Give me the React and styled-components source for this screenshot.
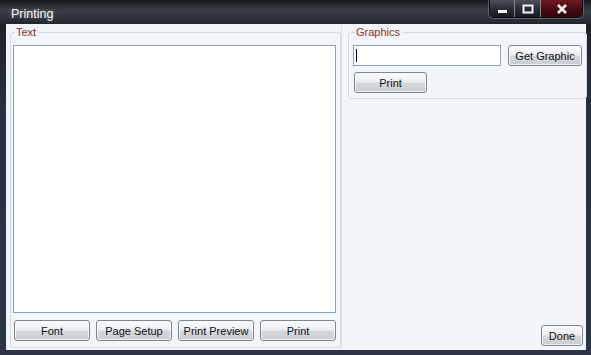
import React from "react";
import styled, { createGlobalStyle } from "styled-components";

const Global = createGlobalStyle`
  html, body { margin: 0; padding: 0; background: #1b2029; }
  * { box-sizing: border-box; }
`;

const Window = styled.div`
  width: 591px;
  height: 355px;
  display: flex;
  flex-direction: column;
  background: linear-gradient(#1a1d22, #263040 30%, #2c3646);
  font-family: "Liberation Sans", Arial, sans-serif;
  font-size: 11px;
  color: #000;
`;

const TitleBar = styled.div`
  height: 24px;
  display: flex;
  align-items: flex-start;
  justify-content: space-between;
  padding: 0 8px 0 11px;
  background: linear-gradient(#15171b, #3a3e46 45%, #22252b 100%);
`;

const Title = styled.span`
  color: #f4f6f8;
  font-size: 12.5px;
  line-height: 14px;
  margin-top: 7px;
  text-shadow: 0 0 4px rgba(255, 255, 255, 0.35);
`;

const Caption = styled.div`
  display: flex;
  height: 18px;
  margin-left: auto;
  border: 1px solid #0b0d10;
  border-top: none;
  border-radius: 0 0 5px 5px;
  overflow: hidden;
  box-shadow: 0 0 0 1px rgba(180, 190, 205, 0.35);
`;

const CapBtn = styled.div`
  width: ${(p) => p.w}px;
  display: flex;
  align-items: center;
  justify-content: center;
  background: ${(p) =>
    p.close
      ? "linear-gradient(#6d1a24, #4a0c14 50%, #2e050a)"
      : "linear-gradient(#4c525c, #2a2f37 50%, #16191e)"};
  border-left: ${(p) => (p.first ? "none" : "1px solid #7b8290")};
`;

const Client = styled.div`
  flex: 1;
  display: flex;
  margin: 0 5px 5px 6px;
  background: #f2f5f9;
`;

const LeftPane = styled.div`
  width: 336px;
  display: flex;
  padding: 2px 0 2px 4px;
  border-right: 1px solid #dde3ea;
`;

const RightPane = styled.div`
  flex: 1;
  display: flex;
  flex-direction: column;
  padding: 2px 0 4px 6px;
`;

const Group = styled.fieldset`
  margin: 0;
  padding: ${(p) => p.pad};
  border: 1px solid #d3dbe4;
  border-radius: 3px;
  display: flex;
  flex-direction: column;
  flex: ${(p) => (p.grow ? 1 : "none")};
  min-width: 0;
`;

const Legend = styled.legend`
  padding: 0 2px 0 1px;
  margin-left: 2px;
  color: #8a3320;
  font-size: 11px;
  line-height: 13px;
`;

const TextArea = styled.div`
  flex: 1;
  margin-top: 6px;
  background: #fff;
  border: 1px solid #86a3b8;
`;

const ButtonRow = styled.div`
  display: grid;
  grid-template-columns: repeat(4, 76px);
  column-gap: 6px;
  margin: 7px 0 0 1px;
`;

const Button = styled.div`
  width: ${(p) => (p.w ? `${p.w}px` : "auto")};
  height: 21px;
  display: flex;
  align-items: center;
  justify-content: center;
  border: 1px solid #7c8590;
  border-radius: 3px;
  background: linear-gradient(#fbfcfd, #eceff2 45%, #d3d8de 55%, #c9ced5);
  box-shadow: inset 0 0 0 1px rgba(255, 255, 255, 0.7);
  color: #111;
  font-size: 11px;
`;

const Row = styled.div`
  display: flex;
  align-items: center;
  gap: 7px;
  margin-top: 6px;
  padding-left: ${(p) => p.indent || 0}px;
`;

const Input = styled.div`
  width: 148px;
  height: 21px;
  background: #fff;
  border: 1px solid #86a3b8;
  padding: 3px 0 0 2px;
`;

const Caret = styled.div`
  width: 1px;
  height: 13px;
  background: #000;
`;

const Footer = styled.div`
  flex: 1;
  display: flex;
  align-items: flex-end;
  justify-content: flex-end;
  padding-right: 4px;
`;

export default function App() {
  return (
    <>
      <Global />
      <Window>
        <TitleBar>
          <Title>Printing</Title>
          <Caption>
            <CapBtn w={24} first>
              <svg width="11" height="10" viewBox="0 0 11 10">
                <rect x="1" y="6" width="9" height="3" fill="#f2f2f2" />
              </svg>
            </CapBtn>
            <CapBtn w={26}>
              <svg width="12" height="10" viewBox="0 0 12 10">
                <rect x="1.5" y="1.5" width="9" height="7" fill="none" stroke="#f2f2f2" strokeWidth="2" />
              </svg>
            </CapBtn>
            <CapBtn w={42} close>
              <svg width="12" height="10" viewBox="0 0 12 10">
                <path d="M2 1 L10 9 M10 1 L2 9" stroke="#f4f4f4" strokeWidth="2.6" />
              </svg>
            </CapBtn>
          </Caption>
        </TitleBar>
        <Client>
          <LeftPane>
            <Group grow pad="0 4px 6px 2px">
              <Legend>Text</Legend>
              <TextArea />
              <ButtonRow>
                <Button>Font</Button>
                <Button>Page Setup</Button>
                <Button>Print Preview</Button>
                <Button>Print</Button>
              </ButtonRow>
            </Group>
          </LeftPane>
          <RightPane>
            <Group pad="0 4px 5px 4px">
              <Legend>Graphics</Legend>
              <Row>
                <Input>
                  <Caret />
                </Input>
                <Button w={74}>Get Graphic</Button>
              </Row>
              <Row indent={1}>
                <Button w={73}>Print</Button>
              </Row>
            </Group>
            <Footer>
              <Button w={42}>Done</Button>
            </Footer>
          </RightPane>
        </Client>
      </Window>
    </>
  );
}
